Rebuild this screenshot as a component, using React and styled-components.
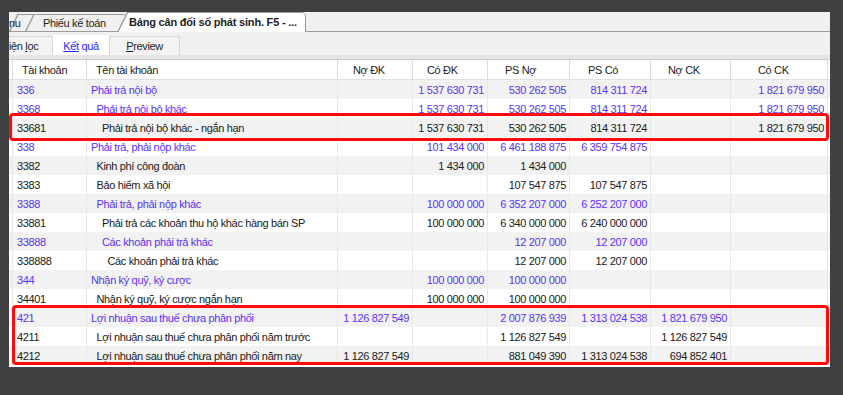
import React from 'react';
import styled, { createGlobalStyle } from 'styled-components';

const Global = createGlobalStyle`
  html, body { margin: 0; padding: 0; background: #3f4042; }
  body { font-family: "Liberation Sans", Arial, sans-serif; }
  * { box-sizing: border-box; }
`;

const COLS = '4px 74px 251px 75px 75px 82px 81px 80px 97px';
const ROW_H = 19;

const Page = styled.div`
  width: 843px;
  height: 395px;
  padding: 12px 13px 28px 9px;
  background: #3f4042;
`;

const Window = styled.div`
  height: 100%;
  display: flex;
  flex-direction: column;
  background: #f0f0f0;
  overflow: hidden;
`;

const DocTabStrip = styled.div`
  flex: none;
  height: 20px;
  display: flex;
  align-items: flex-end;
  border-bottom: 1px solid #9c9c9c;
`;

const DocTab = styled.div`
  position: relative;
  flex: none;
  width: ${p => p.$w}px;
  height: ${p => p.$h}px;
  margin-left: ${p => p.$ml}px;
  margin-bottom: ${p => (p.$active ? -1 : 0)}px;
  padding-left: ${p => p.$pl}px;
  z-index: ${p => p.$z};
  display: flex;
  align-items: center;
  font-size: 11px;
  font-weight: ${p => (p.$active ? 700 : 400)};
  letter-spacing: ${p => (p.$active ? '-0.2px' : '-0.35px')};
  color: #1e1e1e;
  white-space: nowrap;
  &::before {
    content: '';
    position: absolute;
    inset: 0;
    background: #9a9a9a;
    clip-path: polygon(0 100%, ${p => p.$h * 0.5}px 0, calc(100% - 3px) 0, 100% 3px, 100% 100%);
  }
  &::after {
    content: '';
    position: absolute;
    top: 1px;
    right: 1px;
    bottom: 0;
    left: 1.5px;
    background: ${p => (p.$active ? '#ffffff' : '#f0f0f0')};
    clip-path: polygon(0 100%, ${p => (p.$h - 1) * 0.5}px 0, calc(100% - 2px) 0, 100% 2px, 100% 100%);
  }
`;

const TabLabel = styled.span`
  position: relative;
  z-index: 1;
`;

const SubTabBar = styled.div`
  flex: none;
  height: 23px;
  display: flex;
  align-items: flex-end;
`;

const SubTab = styled.div`
  flex: none;
  width: ${p => p.$w}px;
  height: ${p => (p.$active ? 20 : 19)}px;
  display: flex;
  align-items: center;
  justify-content: ${p => (p.$start ? 'flex-start' : 'center')};
  background: ${p => (p.$active ? '#ffffff' : '#f3f3f3')};
  border-top: 1px solid ${p => (p.$active ? '#ffffff' : '#dadada')};
  border-right: 1px solid #d6d6d6;
  font-size: 11px;
  letter-spacing: -0.35px;
  color: ${p => (p.$active ? '#2b2bf0' : '#1e1e1e')};
  white-space: nowrap;
  u { text-underline-offset: 1px; }
`;

const Divider = styled.div`
  flex: none;
  height: 5px;
  background: #e5e5e5;
  border-bottom: 1px solid #cdcdcd;
`;

const Grid = styled.div`
  flex: 1;
  background: #ffffff;
  font-size: 11px;
  letter-spacing: -0.35px;
  display: flex;
  flex-direction: column;
`;

const HeaderRow = styled.div`
  flex: none;
  display: grid;
  grid-template-columns: ${COLS};
  height: 20px;
  border-bottom: 1px solid #e0e0e0;
  background: #ffffff;
  color: #222222;
`;

const HeadCell = styled.div`
  display: flex;
  align-items: center;
  padding-left: ${p => p.$pl}px;
  border-right: 1px solid #dcdcdc;
  white-space: nowrap;
  overflow: hidden;
`;

const Body = styled.div`
  position: relative;
  flex: 1;
`;

const Row = styled.div`
  display: grid;
  grid-template-columns: ${COLS};
  height: ${ROW_H}px;
  background: ${p => (p.$alt ? '#f2f2f2' : '#ffffff')};
  color: ${p => (p.$blue ? '#5a34f4' : '#202020')};
`;

const Cell = styled.div`
  display: flex;
  align-items: center;
  justify-content: ${p => (p.$right ? 'flex-end' : 'flex-start')};
  padding-left: ${p => p.$pl || 0}px;
  padding-right: ${p => (p.$right ? 3 : 0)}px;
  border-right: 1px solid #e8e8e8;
  white-space: nowrap;
  overflow: hidden;
`;

const Highlight = styled.div`
  position: absolute;
  left: ${p => p.$left}px;
  top: ${p => p.$top}px;
  width: ${p => p.$width}px;
  height: ${p => p.$height}px;
  border: 3px solid #ff0a0a;
  border-radius: 4px;
  pointer-events: none;
  z-index: 2;
`;

const headers = [
  { label: '', pl: 0 },
  { label: 'Tài khoản', pl: 9 },
  { label: 'Tên tài khoản', pl: 9 },
  { label: 'Nợ ĐK', pl: 15 },
  { label: 'Có ĐK', pl: 14 },
  { label: 'PS Nợ', pl: 17 },
  { label: 'PS Có', pl: 18 },
  { label: 'Nợ CK', pl: 17 },
  { label: 'Có CK', pl: 27 },
];

const rows = [
  ['336', 'Phải trả nội bộ', 0, true, '', '1 537 630 731', '530 262 505', '814 311 724', '', '1 821 679 950'],
  ['3368', 'Phải trả nội bộ khác', 1, true, '', '1 537 630 731', '530 262 505', '814 311 724', '', '1 821 679 950'],
  ['33681', 'Phải trả nội bộ khác - ngắn hạn', 2, false, '', '1 537 630 731', '530 262 505', '814 311 724', '', '1 821 679 950'],
  ['338', 'Phải trả, phải nộp khác', 0, true, '', '101 434 000', '6 461 188 875', '6 359 754 875', '', ''],
  ['3382', 'Kinh phí công đoàn', 1, false, '', '1 434 000', '1 434 000', '', '', ''],
  ['3383', 'Bảo hiểm xã hội', 1, false, '', '', '107 547 875', '107 547 875', '', ''],
  ['3388', 'Phải trả, phải nộp khác', 1, true, '', '100 000 000', '6 352 207 000', '6 252 207 000', '', ''],
  ['33881', 'Phải trả các khoản thu hộ khác hàng bán SP', 2, false, '', '100 000 000', '6 340 000 000', '6 240 000 000', '', ''],
  ['33888', 'Các khoản phải trả khác', 2, true, '', '', '12 207 000', '12 207 000', '', ''],
  ['338888', 'Các khoản phải trả khác', 3, false, '', '', '12 207 000', '12 207 000', '', ''],
  ['344', 'Nhận ký quỹ, ký cược', 0, true, '', '100 000 000', '100 000 000', '', '', ''],
  ['34401', 'Nhận ký quỹ, ký cược ngắn hạn', 1, false, '', '100 000 000', '100 000 000', '', '', ''],
  ['421', 'Lợi nhuận sau thuế chưa phân phối', 0, true, '1 126 827 549', '', '2 007 876 939', '1 313 024 538', '1 821 679 950', ''],
  ['4211', 'Lợi nhuận sau thuế chưa phân phối năm trước', 1, false, '', '', '1 126 827 549', '', '1 126 827 549', ''],
  ['4212', 'Lợi nhuận sau thuế chưa phân phối năm nay', 1, false, '1 126 827 549', '', '881 049 390', '1 313 024 538', '694 852 401', ''],
];

const highlights = [
  { from: 2, to: 2, left: 0, width: 820, padTop: 5, padBottom: 4 },
  { from: 12, to: 14, left: 3, width: 817, padTop: 3, padBottom: 0 },
];

export default function App() {
  return (
    <>
      <Global />
      <Page>
        <Window>
          <DocTabStrip>
            <DocTab $w={34} $h={17} $ml={0} $pl={0} $z={1}>
              <TabLabel>nu</TabLabel>
            </DocTab>
            <DocTab $w={102} $h={17} $ml={-18} $pl={18} $z={2}>
              <TabLabel>Phiếu kế toán</TabLabel>
            </DocTab>
            <DocTab $active $w={189} $h={20} $ml={-10} $pl={12} $z={3}>
              <TabLabel>Bảng cân đối số phát sinh. F5 - ...</TabLabel>
            </DocTab>
          </DocTabStrip>

          <SubTabBar>
            <SubTab $w={44} $start>
              <span>iện <u>l</u>ọc</span>
            </SubTab>
            <SubTab $w={57} $active>
              <span><u>Kết</u> quả</span>
            </SubTab>
            <SubTab $w={70}>
              <span><u>P</u>review</span>
            </SubTab>
          </SubTabBar>

          <Divider />

          <Grid>
            <HeaderRow>
              {headers.map((h, i) => (
                <HeadCell key={i} $pl={h.pl}>{h.label}</HeadCell>
              ))}
            </HeaderRow>
            <Body>
              {rows.map((r, i) => {
                const [code, name, level, blue, ...nums] = r;
                return (
                  <Row key={code} $alt={i % 2 === 0} $blue={blue}>
                    <Cell />
                    <Cell $pl={4}>{code}</Cell>
                    <Cell $pl={4 + level * 5.5}>{name}</Cell>
                    {nums.map((n, j) => (
                      <Cell key={j} $right>{n}</Cell>
                    ))}
                  </Row>
                );
              })}
              {highlights.map((h, i) => (
                <Highlight
                  key={i}
                  $left={h.left}
                  $width={h.width}
                  $top={h.from * ROW_H - h.padTop}
                  $height={(h.to - h.from + 1) * ROW_H + h.padTop + h.padBottom}
                />
              ))}
            </Body>
          </Grid>
        </Window>
      </Page>
    </>
  );
}
